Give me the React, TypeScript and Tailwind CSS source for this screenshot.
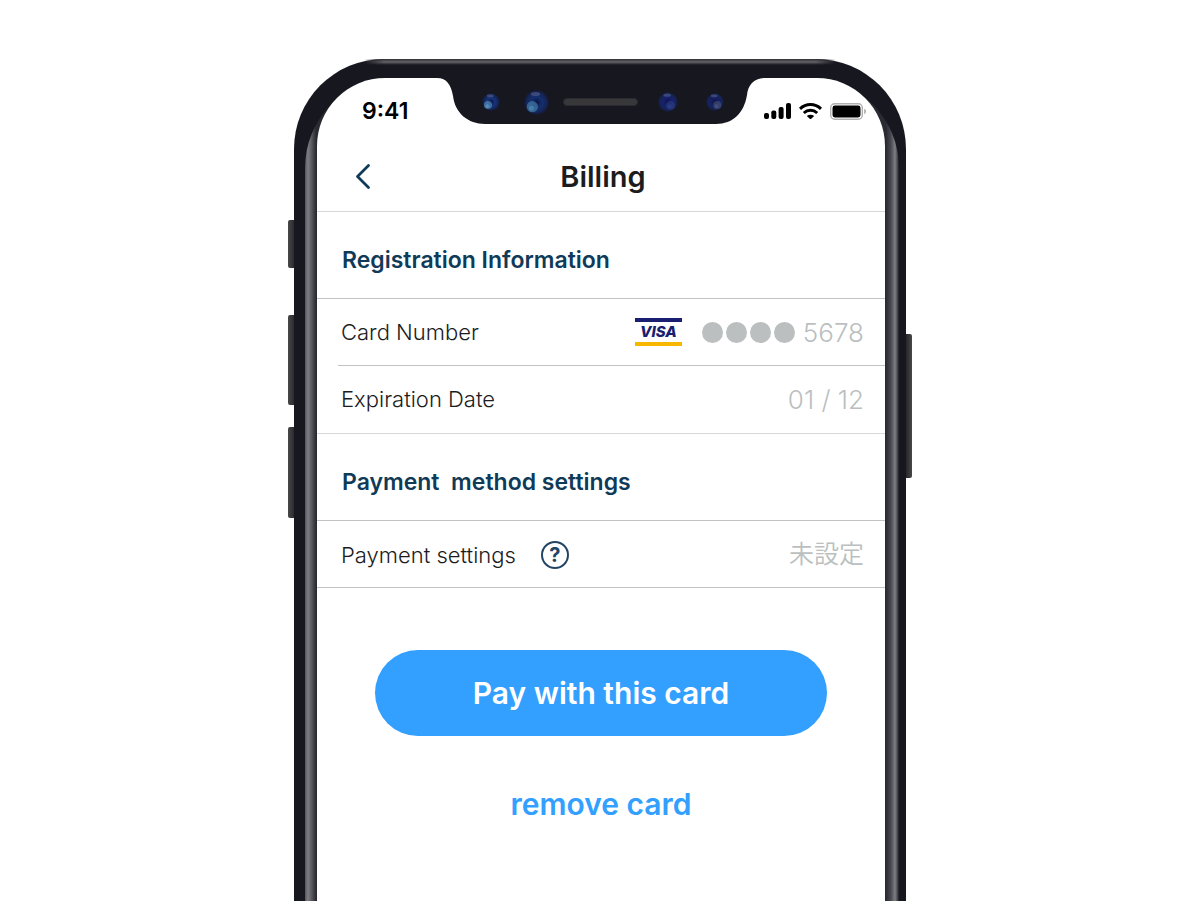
import type { ReactNode } from "react";

function Lens({ id, size, tint, glint, low = "left" }: { id: string; size: number; tint: string; glint: string; low?: "left" | "right" }) {
  const x = low === "left" ? 8 : 15;
  return (
    <svg width={size} height={size} viewBox="0 0 24 24">
      <defs>
        <radialGradient id={id}>
          <stop offset="0" stopColor="#0d1242" />
          <stop offset="0.45" stopColor={tint} />
          <stop offset="0.8" stopColor="#142456" />
          <stop offset="1" stopColor="#17182a" />
        </radialGradient>
      </defs>
      <circle cx="12" cy="12" r="12" fill={`url(#${id})`} />
      <ellipse cx="11" cy="3.8" rx="4.5" ry="2" fill="#53618f" opacity="0.6" />
      <circle cx={x} cy="16" r="5.4" fill={glint} opacity="0.6" />
      <circle cx={x - 1} cy="17.5" r="2.4" fill={glint} opacity="0.7" />
    </svg>
  );
}

function Notch() {
  return (
    <div className="absolute inset-x-0 top-0 flex justify-center" aria-hidden="true">
      <svg width="328" height="46" viewBox="0 0 328 46">
        <path
          d="M0 0H328C317 0 311 7 310 17C307 35 296 46 279 46H48C31 46 18 35 16 18C14 7 10 0 0 0Z"
          fill="#171720"
        />
      </svg>
      <div className="absolute inset-x-0 top-2.5 flex h-7 items-center justify-center pl-1">
        <Lens id="lens-a" size={18} tint="#17347b" glint="#5d9bc2" />
        <span className="w-6" />
        <Lens id="lens-b" size={25} tint="#14306f" glint="#4c8ab5" />
        <span className="mr-5 ml-3.5 h-2 w-[75px] rounded-full border border-[#2a2a30] bg-[#38383b]" />
        <Lens id="lens-c" size={20} tint="#17206d" glint="#2f3f88" low="right" />
        <span className="w-7" />
        <Lens id="lens-d" size={18} tint="#161f63" glint="#4b5577" low="right" />
      </div>
    </div>
  );
}

function StatusBar() {
  return (
    <div className="flex h-[66px] items-center justify-between pr-[18px] pl-[45px]">
      <time className="text-[23px] leading-7 font-semibold text-black">9:41</time>
      <div className="flex items-center gap-2">
        <svg width="27" height="16" viewBox="0 0 27 16" aria-label="Signal">
          <rect x="0" y="10" width="5" height="6" rx="2" />
          <rect x="7.3" y="7.5" width="5" height="8.5" rx="2" />
          <rect x="14.6" y="4" width="5" height="12" rx="2" />
          <rect x="22" y="0" width="5" height="16" rx="2" />
        </svg>
        <svg width="23" height="16" viewBox="0 0 23 16" aria-label="Wi-Fi">
          <g fill="none" stroke="#000" strokeWidth="3">
            <path d="M1 5.8C7 .2 16 .2 22 5.8" />
            <path d="M4.8 10C8.7 6.4 14.3 6.4 18.2 10" />
          </g>
          <path d="M7.8 12.9C10 11.2 13 11.2 15.2 12.9L11.5 16.5Z" />
        </svg>
        <svg width="37" height="17" viewBox="0 0 37 17" aria-label="Battery">
          <rect x="0.7" y="0.7" width="31.6" height="15.6" rx="4" fill="none" stroke="#b0b0b0" strokeWidth="1.4" />
          <rect x="2.5" y="2.5" width="28" height="12" rx="2.4" />
          <path d="M34.2 5.8C36.5 6.7 36.5 10.3 34.2 11.2Z" fill="#aaa" />
        </svg>
      </div>
    </div>
  );
}

function SectionTitle({ children }: { children: ReactNode }) {
  return (
    <h2 className="flex h-[87px] items-center border-b border-[#c0c2c3] pt-2.5 pl-[25px] text-[23px] font-semibold whitespace-pre text-[#103b58]">
      {children}
    </h2>
  );
}

function VisaMark() {
  return (
    <span className="flex h-7 w-[47px] flex-col items-center justify-between border-y-4 border-t-[#1a1f71] border-b-[#f7b600]">
      <span className="text-[15px] leading-5 font-extrabold text-[#1a1f71] italic">VISA</span>
    </span>
  );
}

export default function App() {
  return (
    <div className="flex min-h-screen justify-center bg-white pt-[59px] pr-0.5 font-['Inter','Noto_Sans_CJK_JP',sans-serif]">
      <div className="relative flex w-full max-w-[612px]">
        <div aria-hidden="true">
          <span className="absolute top-[161px] -left-1.5 h-12 w-2 rounded-l-xs bg-linear-to-r from-[#48484a] to-[#222224]" />
          <span className="absolute top-64 -left-1.5 h-[90px] w-2 rounded-l-xs bg-linear-to-r from-[#48484a] to-[#222224]" />
          <span className="absolute top-[368px] -left-1.5 h-[91px] w-2 rounded-l-xs bg-linear-to-r from-[#48484a] to-[#222224]" />
          <span className="absolute top-[275px] -right-1.5 h-36 w-2 rounded-r-xs bg-linear-to-l from-[#48484a] to-[#1c1c1e]" />
        </div>
        <div className="relative flex w-full rounded-t-[90px] bg-[#171720] pt-[19px] pr-[21px] pl-[23px]">
          <div
            className="absolute inset-x-[70px] top-0 h-1.5 bg-linear-to-b from-[#303034] via-[#646468] to-[#171720] mask-[linear-gradient(to_right,transparent,black_20px,black_calc(100%-20px),transparent)]"
            aria-hidden="true"
          />
          <div
            className="absolute top-[19px] right-[7px] bottom-0 left-[11px] rounded-t-[90px] bg-[linear-gradient(to_right,#55555b_0,#7e7e84_3px,#5e5e64_6px,#2a2a32_11px,#2a2a32_calc(100%-13px),#4a4a52_calc(100%-8px),#7e7e84_calc(100%-4px),#3a3a42_calc(100%-1px),#171720_100%)]"
            aria-hidden="true"
          />
          <main className="relative w-full overflow-hidden rounded-t-[68px] bg-white">
            <Notch />
            <StatusBar />
            <header className="relative flex h-[68px] items-center justify-center border-b border-[#d8d8d8] pb-0.5 pl-1">
              <button type="button" aria-label="Back" className="absolute left-9 flex size-7 items-center">
                <svg width="20" height="28" viewBox="0 0 20 28" fill="none" stroke="#103b58" strokeWidth="2.8" strokeLinecap="round" strokeLinejoin="round">
                  <path d="M15.5 2.5L4.5 13.5L15.5 24.5" />
                </svg>
              </button>
              <h1 className="text-[29px] font-semibold text-[#1c1c1e]">Billing</h1>
            </header>

            <SectionTitle>Registration Information</SectionTitle>
            <dl className="text-[22px] font-light">
              <div className="ml-[21px] flex h-[67px] items-center justify-between border-b border-[#c0c2c3] pr-[21px] pl-[3px]">
                <dt className="text-[#1c1c1e]">Card Number</dt>
                <dd className="flex items-center text-[26px] font-[350] text-[#bbbfbf]">
                  <VisaMark />
                  <span className="mr-2 ml-5 flex gap-[3px]" aria-hidden="true">
                    <span className="size-[21px] rounded-full bg-[#bbbfbf]" />
                    <span className="size-[21px] rounded-full bg-[#bbbfbf]" />
                    <span className="size-[21px] rounded-full bg-[#bbbfbf]" />
                    <span className="size-[21px] rounded-full bg-[#bbbfbf]" />
                  </span>
                  5678
                </dd>
              </div>
              <div className="flex h-[68px] items-center justify-between border-b border-[#d8d8d8] pr-[21px] pl-6">
                <dt className="text-[#1c1c1e]">Expiration Date</dt>
                <dd className="text-[26px] font-[350] text-[#bbbfbf]">01 / 12</dd>
              </div>
            </dl>

            <SectionTitle>{"Payment  method settings"}</SectionTitle>
            <div className="flex h-[67px] items-center justify-between border-b border-[#c0c2c3] pt-0.5 pr-[21px] pl-6 text-[22px] font-light">
              <div className="flex items-center gap-[25px] text-[#1c1c1e]">
                Payment settings
                <button type="button" aria-label="About payment settings" className="flex size-7 items-center justify-center rounded-full border-2 border-[#234463] text-xl leading-6 font-bold text-[#234463]">
                  ?
                </button>
              </div>
              <span className="text-[25px] font-[350] text-[#bbbfbf]">未設定</span>
            </div>

            <div className="flex flex-col items-center px-[58px] pt-[62px] pb-16 text-[30px] font-semibold">
              <button type="button" className="h-[86px] w-full rounded-full bg-[#339fff] text-white">
                Pay with this card
              </button>
              <button type="button" className="mt-11 h-12 px-4 text-[#339fff]">
                remove card
              </button>
            </div>
          </main>
        </div>
      </div>
    </div>
  );
}
